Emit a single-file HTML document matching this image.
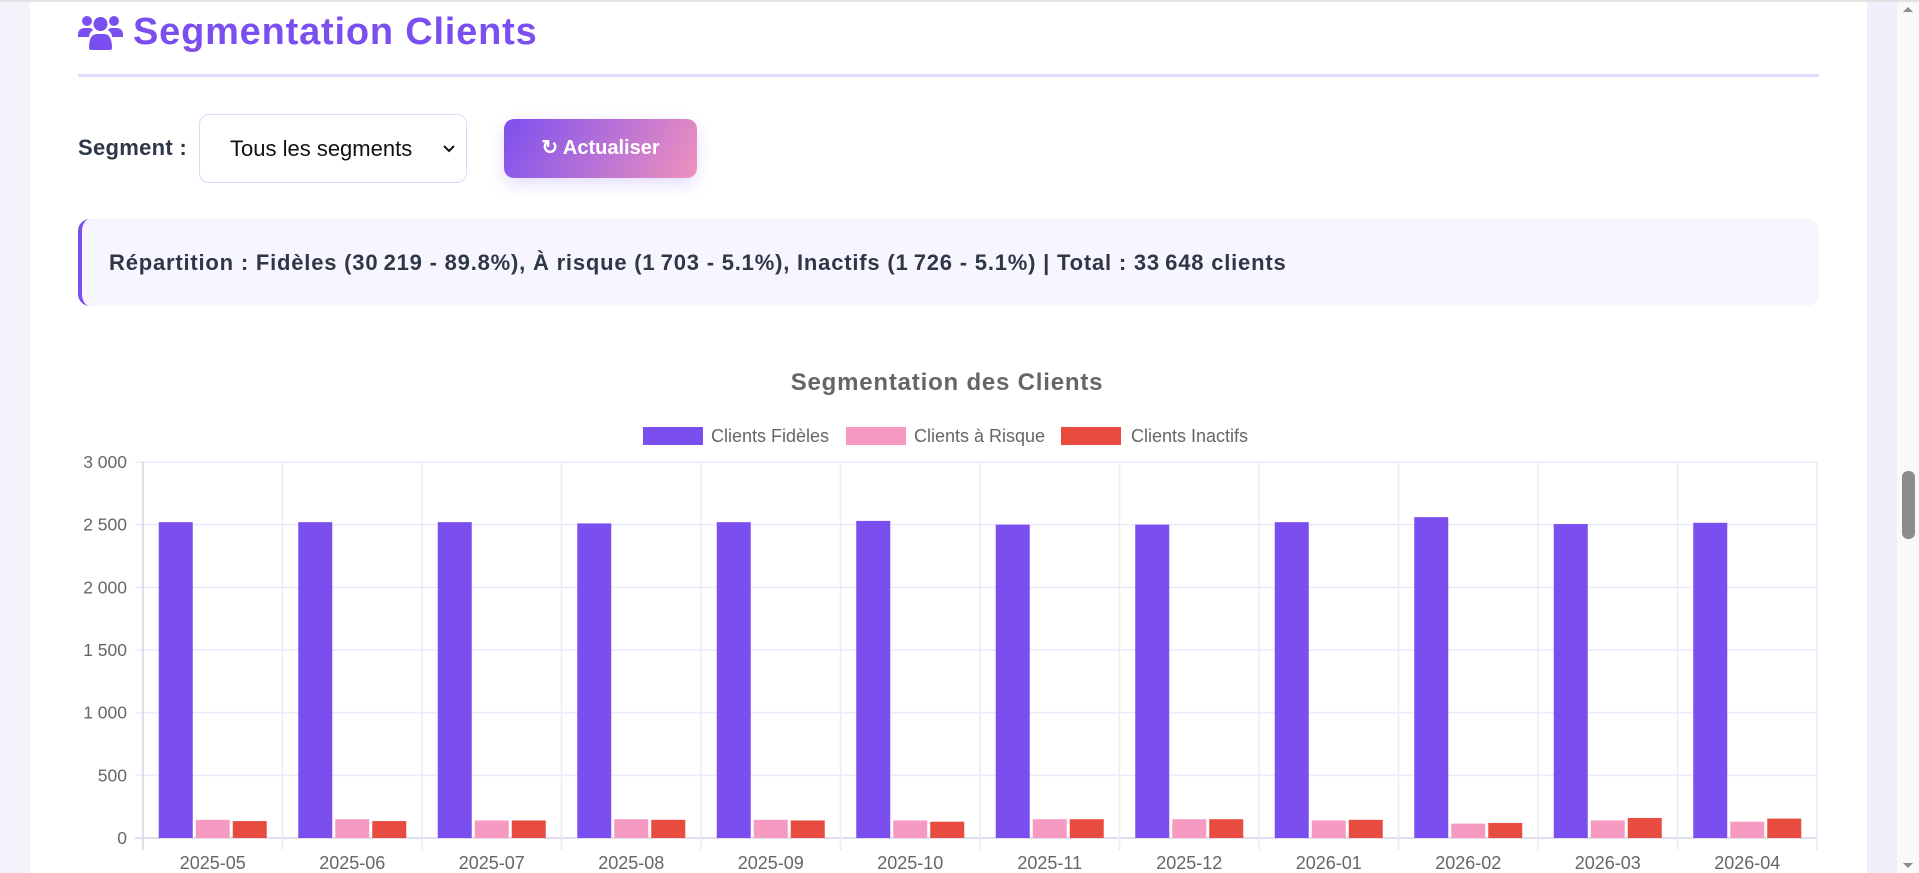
<!DOCTYPE html>
<html><head><meta charset="utf-8"><style>
*{margin:0;padding:0;box-sizing:border-box}
body{width:1919px;height:873px;overflow:hidden;background:#fff;font-family:"Liberation Sans",sans-serif;position:relative}
.abs{position:absolute}
</style></head><body>
<div class="abs" style="left:0;top:0;width:1919px;height:2px;background:#e2e2e2"></div>
<div class="abs" style="left:0;top:2px;width:30px;height:871px;background:#f3f1fa"></div>
<div class="abs" style="left:1867px;top:2px;width:30px;height:871px;background:#f0eef9"></div>
<div class="abs" style="left:1897px;top:2px;width:22px;height:871px;background:#f9f9f9"></div>
<div class="abs" style="left:1902px;top:471px;width:13px;height:68px;background:#8c8c8c;border-radius:6px"></div>
<svg class="abs" style="left:1900px;top:4px" width="16" height="10"><path d="M3 8 L8 3 L13 8Z" fill="#8c8c8c"/></svg>
<svg class="abs" style="left:1900px;top:861px" width="16" height="10"><path d="M3 2 L8 7 L13 2Z" fill="#8c8c8c"/></svg>

<svg class="abs" style="left:78px;top:15px" width="45" height="36" viewBox="0 0 45 36">
<g fill="#7b4fef"><circle cx="9" cy="6" r="5"/><circle cx="36" cy="6" r="5"/><circle cx="22.5" cy="9" r="7"/>
<path d="M0 20 Q0 13 7 13 L11 13 Q14 13 15 15 Q11 18 11 22 L0 22Z"/>
<path d="M45 20 Q45 13 38 13 L34 13 Q31 13 30 15 Q34 18 34 22 L45 22Z"/>
<path d="M11 33 Q11 19 19 19 L26 19 Q34 19 34 33 Q34 35 32 35 L13 35 Q11 35 11 33Z"/></g></svg>
<div class="abs" style="left:133px;top:11px;font-size:38px;font-weight:bold;color:#7b4fef;letter-spacing:0.8px">Segmentation Clients</div>
<div class="abs" style="left:78px;top:74px;width:1741px;height:3px;background:#e2dbfc"></div>

<div class="abs" style="left:78px;top:135px;font-size:22px;font-weight:bold;color:#2d3748;letter-spacing:0.3px">Segment :</div>
<div class="abs" style="left:199px;top:114px;width:268px;height:69px;border:1px solid #ddd6fb;border-radius:10px;font-size:22px;color:#111;padding:21px 0 0 30px">Tous les segments
<svg class="abs" style="left:243px;top:30px" width="12" height="8"><path d="M1 1 L6 6 L11 1" stroke="#111" stroke-width="2" fill="none"/></svg></div>
<div class="abs" style="left:504px;top:119px;width:193px;height:59px;border-radius:10px;background:linear-gradient(120deg,#7b4fef,#f092bd);box-shadow:0 6px 16px rgba(123,79,239,0.2);color:#fff;font-size:20px;font-weight:bold;text-align:center;line-height:59px">&#x21bb; Actualiser</div>

<div class="abs" style="left:78px;top:219px;width:1741px;height:87px;background:#f7f5fe;border-left:4px solid #7b4fef;border-radius:12px"></div>
<div class="abs" style="left:109px;top:250px;font-size:22px;font-weight:bold;color:#2d3748;letter-spacing:0.8px">Répartition : Fidèles (30&#8239;219 - 89.8%), À risque (1&#8239;703 - 5.1%), Inactifs (1&#8239;726 - 5.1%) | Total : 33&#8239;648 clients</div>

<svg class="abs" style="left:0;top:340px" width="1919" height="533" id="c"></svg>
<script>
var s='',oy=-340;
function Y(v){return 838-v*376/3000+oy}
s+='<text x="947" y="'+(390+oy)+'" text-anchor="middle" font-size="24" font-weight="bold" fill="#666" letter-spacing="0.8" font-family="Liberation Sans">Segmentation des Clients</text>';
var lg=[[643,711,'#7b4fef','Clients Fidèles'],[846,914,'#f69ac2','Clients à Risque'],[1061,1131,'#e84b3f','Clients Inactifs']];
lg.forEach(function(l){s+='<rect x="'+l[0]+'" y="'+(427+oy)+'" width="60" height="18" fill="'+l[2]+'"/><text x="'+l[1]+'" y="'+(442+oy)+'" font-size="18" fill="#666" font-family="Liberation Sans">'+l[3]+'</text>';});
for(var i=0;i<=6;i++){var y=Y(i*500);s+='<line x1="135" x2="1817" y1="'+y+'" y2="'+y+'" stroke="'+(i==0?'#d6d2e6':'#ece9fb')+'" stroke-width="1.5"/>';
s+='<text x="127" y="'+(y+6)+'" text-anchor="end" font-size="17.5" fill="#666" font-family="Liberation Sans">'+['0','500','1 000','1 500','2 000','2 500','3 000'][i]+'</text>';}
var w=139.5;
for(var i=0;i<=12;i++){var x=143+i*w;s+='<line x1="'+x+'" x2="'+x+'" y1="'+Y(3000)+'" y2="'+(850+oy)+'" stroke="'+(i==0?'#d6d2e6':'#ece9fb')+'" stroke-width="1.5"/>';}
var P=[2520,2520,2520,2510,2520,2530,2500,2500,2520,2560,2505,2515],
K=[145,150,140,150,145,140,150,150,140,115,140,130],
R=[135,135,140,145,140,130,150,150,145,120,160,155],
L=['2025-05','2025-06','2025-07','2025-08','2025-09','2025-10','2025-11','2025-12','2026-01','2026-02','2026-03','2026-04'];
for(var i=0;i<12;i++){var c=143+i*w+w/2,x0=c-54;
[[P,'#7b4fef'],[K,'#f69ac2'],[R,'#e84b3f']].forEach(function(d,j){var v=d[0][i],x=x0+j*37;s+='<rect x="'+x+'" y="'+Y(v)+'" width="34" height="'+(Y(0)-Y(v))+'" fill="'+d[1]+'"/>';});
s+='<text x="'+c+'" y="'+(869+oy)+'" text-anchor="middle" font-size="18" fill="#666" font-family="Liberation Sans">'+L[i]+'</text>';}
document.getElementById('c').innerHTML=s;
</script>
</body></html>
